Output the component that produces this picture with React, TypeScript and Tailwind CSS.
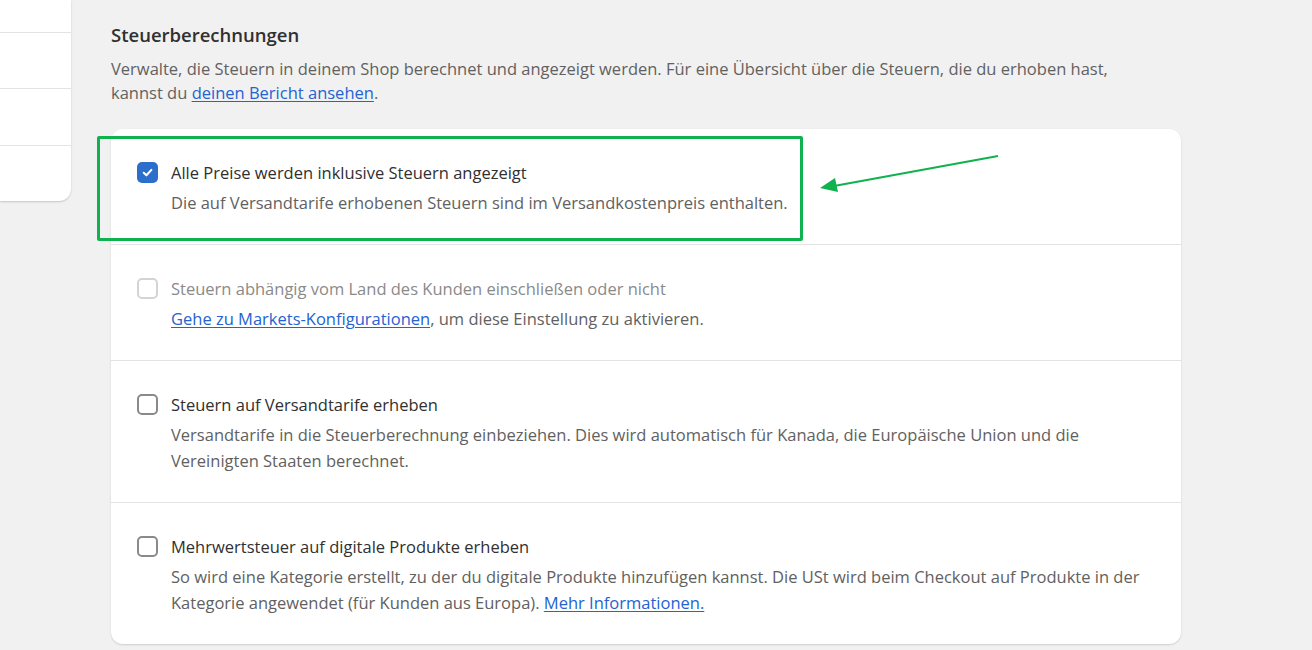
import React from 'react'

type Row = {
  title: string
  checked?: boolean
  disabled?: boolean
  body: React.ReactNode
}

const ROWS: Row[] = [
  {
    title: 'Alle Preise werden inklusive Steuern angezeigt',
    checked: true,
    body: 'Die auf Versandtarife erhobenen Steuern sind im Versandkostenpreis enthalten.',
  },
  {
    title: 'Steuern abhängig vom Land des Kunden einschließen oder nicht',
    disabled: true,
    body: (
      <>
        <a href="#" className="text-[#2463d1] underline underline-offset-2">
          Gehe zu Markets-Konfigurationen
        </a>
        , um diese Einstellung zu aktivieren.
      </>
    ),
  },
  {
    title: 'Steuern auf Versandtarife erheben',
    body: 'Versandtarife in die Steuerberechnung einbeziehen. Dies wird automatisch für Kanada, die Europäische Union und die Vereinigten Staaten berechnet.',
  },
  {
    title: 'Mehrwertsteuer auf digitale Produkte erheben',
    body: (
      <>
        So wird eine Kategorie erstellt, zu der du digitale Produkte hinzufügen kannst. Die USt wird beim Checkout auf Produkte in der Kategorie angewendet (für Kunden aus Europa).{' '}
        <a href="#" className="text-[#2463d1] underline underline-offset-2">
          Mehr Informationen.
        </a>
      </>
    ),
  },
]

function Checkbox({ checked, disabled }: { checked?: boolean; disabled?: boolean }) {
  if (checked) {
    return (
      <span className="mt-[1px] flex h-[21px] w-[21px] shrink-0 items-center justify-center rounded-[5px] bg-[#2c6ecb]">
        <svg width="13" height="13" viewBox="0 0 12 12" fill="none">
          <path d="M2.5 6.2 5 8.6l4.6-5" stroke="white" strokeWidth="1.9" strokeLinecap="round" strokeLinejoin="round" />
        </svg>
      </span>
    )
  }
  return (
    <span
      className={
        disabled
          ? 'mt-[1px] h-[21px] w-[21px] shrink-0 rounded-[5px] border-2 border-[#d4d4d4] bg-white'
          : 'mt-[1px] h-[21px] w-[21px] shrink-0 rounded-[5px] border-2 border-[#8a8a8a] bg-white'
      }
    />
  )
}

export default function App() {
  return (
    <div
      className="relative h-[650px] w-[1312px] overflow-hidden bg-[#f1f1f1] text-[16.5px] text-[#303030]"
      style={{ fontFamily: '"Open Sans", "Noto Sans", sans-serif' }}
    >
      <div className="flex items-start">
        <div className="flex h-[201px] w-[71px] shrink-0 flex-col rounded-br-xl bg-white shadow-[0_1px_2px_rgba(0,0,0,0.18)]">
          <div className="h-[33px] border-b border-[#e3e3e3]" />
          <div className="h-[56px] border-b border-[#e3e3e3]" />
          <div className="h-[57px] border-b border-[#e3e3e3]" />
        </div>

        <div className="ml-[40px] w-[1070px] pt-[23px]">
          <h2 className="text-[18.5px] font-semibold leading-[24px] text-[#303030]">Steuerberechnungen</h2>
          <p className="mt-[10px] leading-[24px] text-[#616161]">
            Verwalte, die Steuern in deinem Shop berechnet und angezeigt werden. Für eine Übersicht über die Steuern, die du erhoben hast,
            <br />
            kannst du{' '}
            <a href="#" className="text-[#2463d1] underline underline-offset-2">
              deinen Bericht ansehen
            </a>
            .
          </p>

          <div className="mt-[24px] overflow-hidden rounded-xl bg-white shadow-[0_1px_2px_rgba(0,0,0,0.15)]">
            {ROWS.map((row, index) => (
              <div
                key={index}
                className={
                  index === 0
                    ? 'flex gap-[13px] pl-[26px] pr-[24px] pt-[32px] pb-[28px]'
                    : 'flex gap-[13px] border-t border-[#e3e3e3] pl-[26px] pr-[24px] pt-[32px] pb-[28px]'
                }
              >
                <Checkbox checked={row.checked} disabled={row.disabled} />
                <div>
                  <div className={row.disabled ? 'leading-[24px] text-[#8a8a8a]' : 'leading-[24px] text-[#303030]'}>
                    {row.title}
                  </div>
                  <div className="mt-[5px] leading-[26px] text-[#616161]">{row.body}</div>
                </div>
              </div>
            ))}
          </div>
        </div>
      </div>

      {/* highlight annotation */}
      <div className="absolute left-[97px] top-[136px] h-[105px] w-[706px] rounded-[2px] border-[3px] border-[#10b14f]" />
      <svg className="absolute left-[810px] top-[145px]" width="200" height="55" viewBox="0 0 200 55">
        <line x1="188" y1="11" x2="24" y2="41" stroke="#10b14f" strokeWidth="2" />
        <polygon points="10,43 25,33 28,47" fill="#10b14f" />
      </svg>
    </div>
  )
}
